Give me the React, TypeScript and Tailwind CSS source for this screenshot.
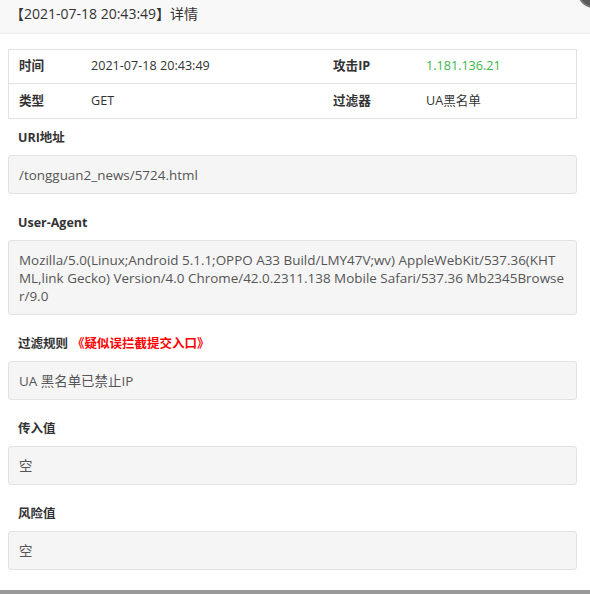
import React from "react";

const font = { fontFamily: '"Open Sans", "Noto Sans CJK SC", sans-serif' };

function Section({ label, extra, children }: { label: string; extra?: string; children: React.ReactNode }) {
  return (
    <div className="mt-[18px]">
      <div className="h-[20px] leading-[21px] pl-[10px] text-[12.5px] font-bold text-[#333]">
        {label}
        {extra && <span className="ml-[4px] text-[#ff0000]">{extra}</span>}
      </div>
      <div className="mt-[8px] border border-[#e2e2e2] rounded-[3px] bg-[#f5f5f5] px-[10px] py-[9.5px] text-[13.45px] leading-[18px] text-[#555] break-all">
        {children}
      </div>
    </div>
  );
}

export default function App() {
  return (
    <div className="relative w-[590px] h-[594px] bg-white overflow-hidden" style={font}>
      <div className="h-[34px] bg-[#f8f8f8] border-b border-[#eee] pl-[10px] text-[14px] leading-[28px] text-[#333]">
        【2021-07-18 20:43:49】详情
      </div>
      <div className="absolute left-[578px] top-[-22px] w-[30px] h-[30px] rounded-full bg-[#5a5a5a] border-2 border-[#777]" />
      <div className="pl-[8px] pr-[13px] pt-[15px]">
        <div className="border border-[#e2e2e2] text-[12.6px] text-[#333]">
          <div className="grid grid-cols-[72px_242px_93px_1fr] h-[34px] items-center border-b border-[#e2e2e2]">
            <div className="pl-[10px] font-bold">时间</div>
            <div className="pl-[10px]">2021-07-18 20:43:49</div>
            <div className="pl-[10px] font-bold">攻击IP</div>
            <div className="pl-[10px] text-[#39b54a]">1.181.136.21</div>
          </div>
          <div className="grid grid-cols-[72px_242px_93px_1fr] h-[34px] items-center">
            <div className="pl-[10px] font-bold">类型</div>
            <div className="pl-[10px]">GET</div>
            <div className="pl-[10px] font-bold">过滤器</div>
            <div className="pl-[10px]">UA黑名单</div>
          </div>
        </div>
        <div className="-mt-[10px]">
          <Section label="URI地址">/tongguan2_news/5724.html</Section>
          <Section label="User-Agent">
            Mozilla/5.0(Linux;Android 5.1.1;OPPO A33 Build/LMY47V;wv) AppleWebKit/537.36(KHTML,link Gecko) Version/4.0 Chrome/42.0.2311.138 Mobile Safari/537.36 Mb2345Browser/9.0
          </Section>
          <Section label="过滤规则" extra="《疑似误拦截提交入口》">UA 黑名单已禁止IP</Section>
          <Section label="传入值">空</Section>
          <Section label="风险值">空</Section>
        </div>
      </div>
      <div className="absolute left-0 right-0 bottom-0 h-[4px] bg-[#999]" />
    </div>
  );
}
